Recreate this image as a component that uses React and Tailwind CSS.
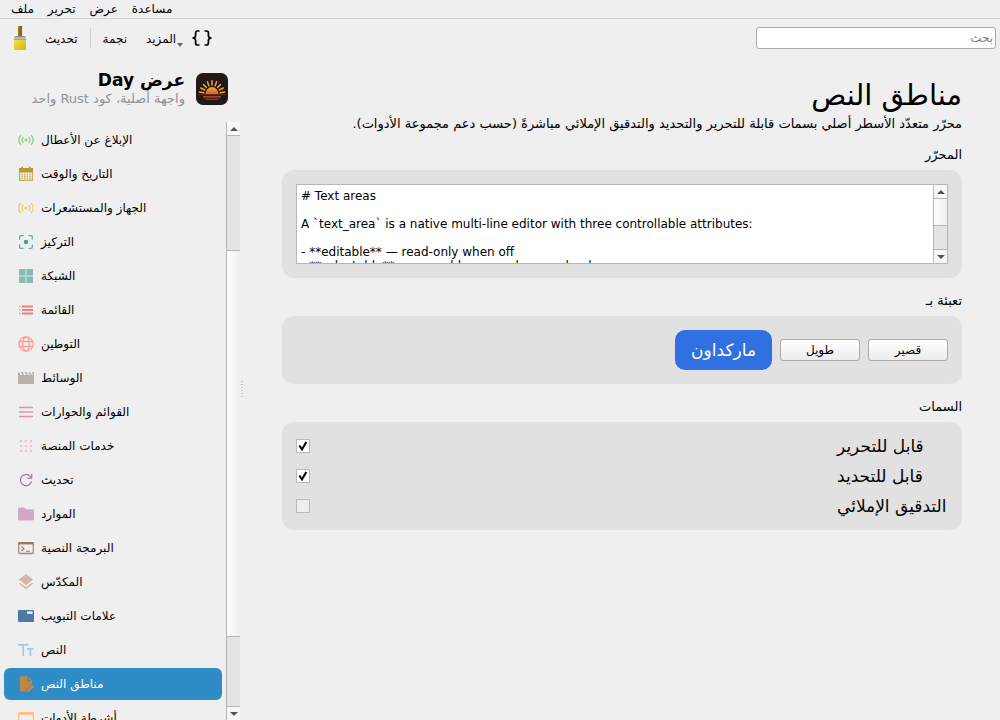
import { useState } from "react";
import { MdFolder, MdLayers } from "react-icons/md";

const menus = ["ملف", "تحرير", "عرض", "مساعدة"];

function Glyph({ className, children }) {
  return (
    <svg
      viewBox="0 0 16 16"
      className={`size-4 shrink-0 ${className}`}
      fill="none"
      stroke="currentColor"
      strokeWidth="1.300"
      aria-hidden="true"
    >
      {children}
    </svg>
  );
}

const Signal = (
  <>
    <circle cx="8" cy="8" r="1.500" fill="currentColor" stroke="none" />
    <path d="M2.900 3Q.9 5.200.9 8t2 5M13.100 3q2 2.200 2 5t-2 5M5.400 5Q4 6.300 4 8t1.400 3M10.600 5Q12 6.300 12 8t-1.400 3" />
  </>
);

const Calendar = (
  <>
    <path d="M1.600 5v9.400h12.800V5" strokeOpacity="0.75" />
    <path d="M1 2h2.500V.5h1.500V2h6V.5h1.500V2H15v4.500H1z" fill="currentColor" stroke="none" />
    <path d="M3.500 8.500h9M3.500 10.500h9M3.500 12.500h9" strokeDasharray="1.500 1" strokeOpacity="0.65" />
  </>
);

const Focus = (
  <>
    <path d="M1.700 5.500V3q0-1.300 1.300-1.300h2.500M10.500 1.700H13q1.300 0 1.300 1.300v2.500M14.300 10.500V13q0 1.300-1.300 1.300h-2.500M5.500 14.300H3q-1.300 0-1.300-1.300v-2.500" strokeOpacity="0.8" />
    <circle cx="8" cy="8" r="2.200" fill="currentColor" stroke="none" />
  </>
);

const Grid = (
  <g fill="currentColor" stroke="none">
    <rect x="1" y="1" width="14" height="14" rx="1" fillOpacity="0.45" />
    <path d="M1 1h6.300v6.300H1zM8.700 1H15v6.300H8.700zM1 8.700h6.300V15H1zM8.700 8.700H15V15H8.700z" />
  </g>
);

const List = (
  <>
    <path d="M1 4.500h1.500M1 8h1.500M1 11.500h1.500" strokeWidth="1.600" strokeOpacity="0.55" />
    <path d="M4 4.500h11M4 8h11M4 11.500h11" strokeWidth="1.800" strokeOpacity="0.7" />
  </>
);

const Globe = (
  <>
    <circle cx="8" cy="8" r="7.200" />
    <ellipse cx="8" cy="8" rx="3.300" ry="7.200" />
    <path d="M1.200 5.500h13.600M1.200 10.500h13.600" />
  </>
);

const Clapper = (
  <path
    d="M1 2l1.500 3h1.800L3 2h1.700l1.500 3H8L6.700 2h1.700l1.500 3h1.800L10.400 2h1.700l1.500 3h1.200L13.900 2H15q1 0 1 1v10q0 1-1 1H1q-1 0-1-1V3q0-1 1-1z"
    fill="currentColor"
    stroke="none"
  />
);

const Lines = <path d="M1 3.500h14M1 8h14M1 12.500h14" strokeWidth="1.700" strokeOpacity="0.7" />;

const Dots = (
  <path
    d="M2 2h2.200v2.200H2zM6.900 2h2.200v2.200H6.900zM11.800 2H14v2.200h-2.200zM2 6.900h2.200v2.200H2zM6.900 6.900h2.200v2.200H6.900zM11.800 6.900H14v2.200h-2.200zM2 11.800h2.200V14H2zM6.900 11.800h2.200V14H6.900zM11.800 11.800H14V14h-2.200z"
    fill="currentColor"
    stroke="none"
  />
);

const Reload = (
  <>
    <path d="M13.500 9.500A5.600 5.600 0 1 1 12 4.100l1.300 1.500" />
    <path d="M13.700 1.800v4.400H9.300" />
  </>
);

const Terminal = (
  <>
    <rect x="0.700" y="2.700" width="14.600" height="10.800" rx="1" strokeOpacity="0.85" />
    <path d="M0.500 3.200h15" strokeWidth="2.400" />
    <path d="M3.500 6.500L6 8.700L3.500 11M8 11.300h4" strokeWidth="1.100" />
  </>
);

const TabPage = (
  <>
    <rect y="2" width="16" height="12" rx="1" fill="currentColor" stroke="none" />
    <rect x="9" y="3.300" width="5.500" height="2.700" fill="#dfe7ef" stroke="none" />
  </>
);

const Letters = <path d="M0 2.800h10.500M5.200 2.800V14M9 6.800h6.500M12.300 6.800V14" strokeWidth="1.700" />;

const EditDocument = (
  <g fill="currentColor" stroke="none">
    <path fillRule="evenodd" d="M3 .3h6.500L14 4.800v3L7.500 14v1.500H3q-1 0-1-1v-13.200q0-1 1-1zM9 1.500v3.800h3.800z" />
    <path d="M8.800 15.800v-2.200l4.600-4.400q.8-.6 1.600.1l.5.500q.7.800 0 1.600l-4.500 4.400z" />
  </g>
);

const Bar = (
  <>
    <rect x="0.700" y="2.700" width="14.600" height="11" rx="1" />
    <path d="M0.500 3.500h15" strokeWidth="2.600" />
  </>
);

const pages = [
  { label: "الإبلاغ عن الأعطال", glyph: Signal, color: "text-[#8cd17d]" },
  { label: "التاريخ والوقت", glyph: Calendar, color: "text-[#b6992d]" },
  { label: "الجهاز والمستشعرات", glyph: Signal, color: "text-[#f1ce63]" },
  { label: "التركيز", glyph: Focus, color: "text-[#499894]" },
  { label: "الشبكة", glyph: Grid, color: "text-[#86bcb6]" },
  { label: "القائمة", glyph: List, color: "text-[#e15759]" },
  { label: "التوطين", glyph: Globe, color: "text-[#ff9d9a]" },
  { label: "الوسائط", glyph: Clapper, color: "text-[#bab0ac]" },
  { label: "القوائم والحوارات", glyph: Lines, color: "text-[#d37295]" },
  { label: "خدمات المنصة", glyph: Dots, color: "text-[#fabfd2]" },
  { label: "تحديث", glyph: Reload, color: "text-[#b07aa1]" },
  { label: "الموارد", icon: MdFolder, color: "text-[#d4a6c8]" },
  { label: "البرمجة النصية", glyph: Terminal, color: "text-[#9d7660]" },
  { label: "المكدّس", icon: MdLayers, color: "text-[#d7b5a6]" },
  { label: "علامات التبويب", glyph: TabPage, color: "text-[#4e79a7]" },
  { label: "النص", glyph: Letters, color: "text-[#a0cbe8]" },
  { label: "مناطق النص", glyph: EditDocument, color: "text-[#bd8748]" },
  { label: "أشرطة الأدوات", glyph: Bar, color: "text-[#ffbe7d]" },
];

const markdown = `# Text areas

A \`text_area\` is a native multi-line editor with three controllable attributes:

- **editable** — read-only when off
- **selectable** — copyable even when read-only
- **spell check** — native checking where supported`;

function BrushIcon() {
  return (
    <svg width="14" height="26" viewBox="0 0 14 26" aria-hidden="true">
      <defs>
        <linearGradient id="bristle" x1="0" y1="0" x2="1" y2="1">
          <stop offset="0" stopColor="#f2e445" />
          <stop offset="1" stopColor="#d3b411" />
        </linearGradient>
        <linearGradient id="ferrule" x1="0" y1="0" x2="0" y2="1">
          <stop offset="0" stopColor="#80827f" />
          <stop offset="0.5" stopColor="#c4c6c3" />
          <stop offset="1" stopColor="#858783" />
        </linearGradient>
      </defs>
      <rect x="5" y="1" width="4" height="11" rx="1" fill="#a26c1f" />
      <rect x="7.500" y="1" width="1.500" height="11" fill="#8b5a16" />
      <path d="M1 15.500v-3q0-1.500 2-1.500h8q2 0 2 1.500v3z" fill="url(#ferrule)" />
      <path d="M1 15h12v8q0 1.500-1.500 1.500h-9.500q-1 0-1-1.500z" fill="url(#bristle)" />
      <path d="M0.500 24.500h13" stroke="#b9a95a" strokeOpacity="0.5" />
    </svg>
  );
}

function SunriseLogo() {
  return (
    <svg width="32" height="32" viewBox="0 0 32 32" className="shrink-0" aria-hidden="true">
      <defs>
        <linearGradient id="sun" x1="0" y1="0" x2="0" y2="1">
          <stop offset="0" stopColor="#f0a83c" />
          <stop offset="1" stopColor="#d9592b" />
        </linearGradient>
      </defs>
      <rect width="32" height="32" rx="7" fill="#231815" />
      <path d="M9.500 21.300a6.500 7.300 0 0 1 13 0z" fill="url(#sun)" />
      <g stroke="#eda540" strokeWidth="1.500" strokeLinecap="round">
        <path d="M16 12V7.700M12.900 12.700l-1.500-4M19.100 12.700l1.500-4M10.400 14.500L7.500 11.500M21.600 14.500l2.900-3M8.700 17l-3.900-2M23.300 17l3.900-2M7.900 19.700l-4.500-.6M24.100 19.700l4.500-.6" />
      </g>
      <path d="M3 21.600h26" stroke="#6e3320" strokeWidth="0.800" />
      <path d="M7 23.800h18" stroke="#a04528" strokeWidth="1.700" />
      <path d="M9.500 26.300h13" stroke="#853620" strokeWidth="1.500" />
    </svg>
  );
}

function Arrow({ down = false }) {
  return (
    <svg width="8" height="4" viewBox="0 0 8 4" aria-hidden="true" className={down ? "rotate-180" : ""}>
      <path d="M4 0L8 4H0z" fill="#555" />
    </svg>
  );
}

function ScrollBar({ before, thumb, after }) {
  return (
    <div className="flex w-3.5 shrink-0 flex-col border-l border-[#b6b6b6] bg-[#e4e4e4]" aria-hidden="true">
      <div className="flex h-3.5 shrink-0 items-center justify-center border-b border-[#b6b6b6] bg-[#f7f7f7]">
        <Arrow />
      </div>
      <div style={{ flexGrow: before }} />
      <div
        className={`${before ? "border-y" : "border-b"} border-[#b6b6b6] bg-linear-to-r from-white to-[#eeeeee]`}
        style={{ flexGrow: thumb }}
      />
      <div style={{ flexGrow: after }} />
      <div className="flex h-3.5 shrink-0 items-center justify-center border-t border-[#b6b6b6] bg-[#f7f7f7]">
        <Arrow down />
      </div>
    </div>
  );
}

function Section({ title, htmlFor, children }) {
  return (
    <section className="flex flex-col gap-2">
      {htmlFor ? (
        <label htmlFor={htmlFor} dir="rtl" className="text-[13px] leading-3.5">
          {title}
        </label>
      ) : (
        <h2 dir="rtl" className="text-[13px] leading-3.5">
          {title}
        </h2>
      )}
      <div className="rounded-xl bg-[#e1e1e1] p-3.5">{children}</div>
    </section>
  );
}

function Trait({ id, label, checked, onChange }) {
  return (
    <div className="flex h-5 items-center justify-between">
      <span className="grid size-3.5">
        <input
          id={id}
          type="checkbox"
          checked={checked}
          onChange={(e) => onChange(e.target.checked)}
          className="peer col-start-1 row-start-1 size-3.5 appearance-none border border-[#b9b9b9] bg-[#eeeeee] checked:bg-white"
        />
        <svg
          viewBox="0 0 14 14"
          className="pointer-events-none invisible col-start-1 row-start-1 size-3.5 peer-checked:visible"
          aria-hidden="true"
        >
          <path d="M3.300 6.500L6 10.300L10.300 3" fill="none" stroke="#000" strokeWidth="2" />
        </svg>
      </span>
      <label htmlFor={id} className="w-[111px] text-left text-[17px] leading-5 whitespace-nowrap">
        {label}
      </label>
    </div>
  );
}

const plainButton =
  "h-[22px] w-20 rounded-[3px] border border-[#ababab] bg-linear-to-b from-white to-[#ececec] leading-3.5";

export default function App() {
  const [text, setText] = useState(markdown);
  const [editable, setEditable] = useState(true);
  const [selectable, setSelectable] = useState(true);
  const [spelling, setSpelling] = useState(false);

  return (
    <div
      lang="ar"
      className="flex h-screen flex-col overflow-hidden bg-[#efefef] font-['DejaVu_Sans',sans-serif] text-xs text-black"
    >
      <nav className="flex h-[19px] shrink-0 items-center gap-3.5 border-b border-[#d0d0d0] px-[11px]">
        {menus.map((m) => (
          <button key={m} className="leading-3.5">
            {m}
          </button>
        ))}
      </nav>

      <div className="flex h-[38px] shrink-0 items-center justify-between pr-1 pl-[13px]">
        <div className="flex items-center">
          <button aria-label="فرشاة">
            <BrushIcon />
          </button>
          <button className="ml-[18px] pt-0.5">تحديث</button>
          <span className="mx-3 h-5 border-l border-[#d0d0d0]" />
          <button className="pt-0.5">نجمة</button>
          <button className="ml-[19px] flex items-end gap-px pt-0.5">
            المزيد
            <svg width="6" height="4" viewBox="0 0 6 4" aria-hidden="true">
              <path d="M0 0h6L3 4z" fill="#666" />
            </svg>
          </button>
          <button className="ml-[9px]" aria-label="الشيفرة">
            <svg width="20" height="16" viewBox="0 0 20 16" fill="none" stroke="#000" strokeWidth="1.700" aria-hidden="true">
              <path d="M7.500 1H5.500Q3.600 1 3.600 3v2.500Q3.600 8 .5 8q3.100 0 3.100 2.500V13q0 2 1.900 2h2M12.500 1h2q1.900 0 1.900 2v2.500q0 2.500 3.100 2.500q-3.100 0-3.100 2.500V13q0 2-1.900 2h-2" />
            </svg>
          </button>
        </div>
        <input
          type="search"
          dir="rtl"
          placeholder="بحث"
          aria-label="بحث"
          className="h-[22px] w-60 rounded-[3px] border border-[#ababab] bg-white px-0.5 placeholder:text-[#808080]"
        />
      </div>

      <div className="flex min-h-0 grow">
        <aside className="flex w-60 shrink-0 flex-col">
          <header className="flex h-[65px] shrink-0 items-center justify-end gap-[11px] pr-3 pb-0.5">
            <div dir="rtl" className="flex flex-col gap-px pb-px">
              <p className="text-[17px] leading-5 font-bold">عرض Day</p>
              <p className="text-[13px] leading-4 text-[#92929a]">واجهة أصلية، كود Rust واحد</p>
            </div>
            <SunriseLogo />
          </header>
          <div className="flex min-h-0 grow">
            <ul className="flex min-w-0 grow flex-col gap-0.5 overflow-hidden px-1 pt-0.5">
              {pages.map(({ label, icon: Icon, glyph, color }) => {
                const current = label === "مناطق النص";
                return (
                  <li key={label} className="shrink-0">
                    <a
                      href="#"
                      aria-current={current ? "page" : undefined}
                      className={`flex h-8 items-center gap-[7px] rounded-md px-3.5 ${
                        current ? "bg-[#308cc6] text-white" : ""
                      }`}
                    >
                      {Icon ? (
                        <Icon viewBox="2 2 20 20" className={`size-4 shrink-0 ${color}`} />
                      ) : (
                        <Glyph className={color}>{glyph}</Glyph>
                      )}
                      {label}
                    </a>
                  </li>
                );
              })}
            </ul>
            <ScrollBar before={114} thumb={387} after={69} />
          </div>
        </aside>

        <div className="flex w-1 shrink-0 items-center justify-center" aria-hidden="true">
          <svg width="2" height="16" viewBox="0 0 2 16">
            <path d="M1 0v16" stroke="#a8a8a8" strokeWidth="1" strokeDasharray="1 2" />
          </svg>
        </div>

        <main className="flex min-w-0 grow flex-col px-[38px] pt-5">
          <h1 dir="rtl" className="text-[29px] leading-9">
            مناطق النص
          </h1>
          <p dir="rtl" className="pt-1 text-[13px] leading-3.5">
            محرّر متعدّد الأسطر أصلي بسمات قابلة للتحرير والتحديد والتدقيق الإملائي مباشرةً (حسب دعم مجموعة الأدوات).
          </p>

          <div className="flex flex-col gap-4 pt-[17px]">
            <Section title="المحرّر" htmlFor="editor">
              <div className="flex h-20 border border-[#b6b6b6] bg-white">
                <textarea
                  id="editor"
                  value={text}
                  onChange={(e) => setText(e.target.value)}
                  readOnly={!editable}
                  spellCheck={spelling}
                  className={`min-w-0 grow resize-none overflow-hidden p-1 leading-3.5 outline-none ${
                    selectable ? "" : "select-none"
                  }`}
                />
                <ScrollBar before={0} thumb={27} after={23} />
              </div>
            </Section>

            <Section title="تعبئة بـ">
              <div dir="rtl" className="flex items-center gap-2">
                <button className={plainButton} onClick={() => setText("Short text.")}>
                  قصير
                </button>
                <button className={plainButton} onClick={() => setText(markdown.repeat(3))}>
                  طويل
                </button>
                <button
                  className="h-10 rounded-[10px] bg-[#3070e0] px-4 text-[17px] leading-5 text-white"
                  onClick={() => setText(markdown)}
                >
                  ماركداون
                </button>
              </div>
            </Section>

            <Section title="السمات">
              <div className="flex flex-col gap-2.5">
                <Trait id="editable" label="قابل للتحرير" checked={editable} onChange={setEditable} />
                <Trait id="selectable" label="قابل للتحديد" checked={selectable} onChange={setSelectable} />
                <Trait id="spelling" label="التدقيق الإملائي" checked={spelling} onChange={setSpelling} />
              </div>
            </Section>
          </div>
        </main>
      </div>
    </div>
  );
}
